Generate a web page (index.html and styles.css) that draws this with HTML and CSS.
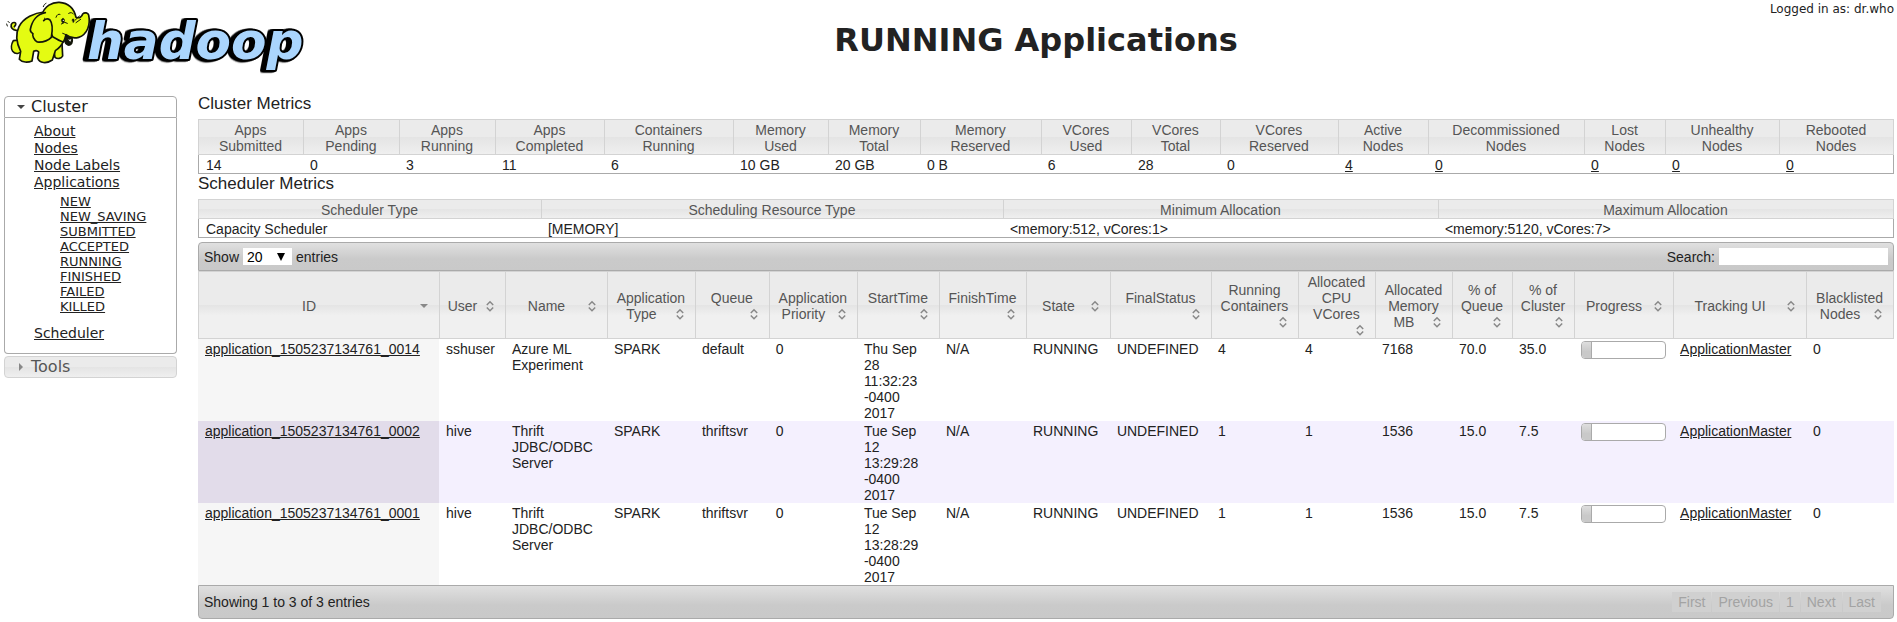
FILE: index.html
```html
<!DOCTYPE html>
<html lang="en">
<head>
<meta charset="utf-8">
<title>RUNNING Applications</title>
<link rel="stylesheet" href="styles.css">
</head>
<body>
<svg class="defs" width="0" height="0" aria-hidden="true">
  <symbol id="sort" viewBox="0 0 16 16"><path d="M4.800 7 8 3.800 11.200 7M4.800 9.500 8 12.700 11.200 9.500" fill="none" stroke="#888" stroke-width="1.500"/></symbol>
  <symbol id="sort-down" viewBox="0 0 16 16"><path d="M4 6h8l-4 4z" fill="#888"/></symbol>
</svg>

<header class="top">
  <a class="logo" href="#" aria-label="Hadoop">
    <svg width="310" height="76" viewBox="0 0 930 228">
      <g stroke="#14170a" stroke-width="5" stroke-linejoin="round" stroke-linecap="round" fill="#e4fb12">
        <path d="M50 91C38 92 31 82 34 73 38 65 49 66 47 74L43 80"/>
        <path d="M40 122C34 132 32 146 38 154 46 164 60 162 66 152L60 120Z"/>
        <path d="M160 140 165 172C172 178 184 176 188 168L186 130 170 118Z"/>
        <path d="M132 36C104 38 70 54 57 80 46 102 50 130 62 154L58 178C66 188 84 188 96 183L101 154C107 151 113 152 116 156L113 174C118 190 140 192 157 180L166 152C178 144 186 134 190 124L196 70Z"/>
        <path d="M196 104C192 118 194 132 204 135 214 137 219 128 216 113Z" fill="#14170a"/>
        <path d="M126 44C134 18 156 6 178 7 206 9 222 24 228 52 238 56 246 50 248 42 254 36 264 38 266 45 272 74 262 104 236 112 222 116 208 112 198 104 196 112 194 120 190 126 178 122 168 116 158 110Z"/>
        <path d="M136 38C112 42 96 62 91 88 90 98 99 100 99 101 96 106 101 120 112 126 128 127 144 122 154 112 158 90 158 70 150 60 143 55 136 57 131 62"/>
        <path d="M168 52C170 44 176 41 180 43M206 40C212 36 218 38 220 42M226 60 238 48M228 68 242 58M184 72 194 67 202 70M188 100 198 104M130 20C132 14 134 12 138 10M22 78 20 72M28 68 24 64" fill="none" stroke-width="3"/>
        <path d="M184 60C186 53 192 53 194 60L192 68C188 70 184 67 184 60ZM216 60C218 53 224 56 223 64L220 68Z" fill="#14170a" stroke-width="1"/>
        <circle cx="190" cy="61" r="2" fill="#fff" stroke="none"/>
        <path d="M204 118C207 120 211 120 214 117L211 125Z" fill="#fff" stroke="none"/>
      </g>
      <text class="wordmark" x="261" y="176">hadoop</text>
    </svg>
  </a>
  <h1>RUNNING Applications</h1>
  <div class="user">Logged in as: dr.who</div>
</header>

<div class="layout">
  <nav class="side">
    <h3 class="side-head open"><svg width="16" height="16" viewBox="0 0 16 16"><path d="M4 6h8l-4 4z" fill="#454545"/></svg>Cluster</h3>
    <div class="side-body">
      <ul class="menu">
        <li><a href="#">About</a></li>
        <li><a href="#">Nodes</a></li>
        <li><a href="#">Node Labels</a></li>
        <li><a href="#">Applications</a>
          <ul class="submenu">
            <li><a href="#">NEW</a></li>
            <li><a href="#">NEW_SAVING</a></li>
            <li><a href="#">SUBMITTED</a></li>
            <li><a href="#">ACCEPTED</a></li>
            <li><a href="#">RUNNING</a></li>
            <li><a href="#">FINISHED</a></li>
            <li><a href="#">FAILED</a></li>
            <li><a href="#">KILLED</a></li>
          </ul>
        </li>
        <li><a href="#">Scheduler</a></li>
      </ul>
    </div>
    <h3 class="side-head closed"><svg width="16" height="16" viewBox="0 0 16 16"><path d="M6 4v8l4-4z" fill="#888"/></svg>Tools</h3>
  </nav>

  <main>
    <h3 class="section">Cluster Metrics</h3>
    <table class="grid metrics">
      <thead>
        <tr><th>Apps<br>Submitted</th><th>Apps<br>Pending</th><th>Apps<br>Running</th><th>Apps<br>Completed</th><th>Containers<br>Running</th><th>Memory<br>Used</th><th>Memory<br>Total</th><th>Memory<br>Reserved</th><th>VCores<br>Used</th><th>VCores<br>Total</th><th>VCores<br>Reserved</th><th>Active<br>Nodes</th><th>Decommissioned<br>Nodes</th><th>Lost<br>Nodes</th><th>Unhealthy<br>Nodes</th><th>Rebooted<br>Nodes</th></tr>
      </thead>
      <tbody>
        <tr><td>14</td><td>0</td><td>3</td><td>11</td><td>6</td><td>10 GB</td><td>20 GB</td><td>0 B</td><td>6</td><td>28</td><td>0</td><td><a href="#">4</a></td><td><a href="#">0</a></td><td><a href="#">0</a></td><td><a href="#">0</a></td><td><a href="#">0</a></td></tr>
      </tbody>
    </table>

    <h3 class="section">Scheduler Metrics</h3>
    <table class="grid scheduler">
      <thead>
        <tr><th>Scheduler Type</th><th>Scheduling Resource Type</th><th>Minimum Allocation</th><th>Maximum Allocation</th></tr>
      </thead>
      <tbody>
        <tr><td>Capacity Scheduler</td><td>[MEMORY]</td><td>&lt;memory:512, vCores:1&gt;</td><td>&lt;memory:5120, vCores:7&gt;</td></tr>
      </tbody>
    </table>

    <div class="bar bar-top">
      <label class="length">Show
        <span class="select"><select><option>20</option><option>40</option><option>60</option></select><svg width="8" height="8" viewBox="0 0 8 8"><path d="M0 0h8L4 8z"/></svg></span>
        entries</label>
      <label class="search">Search: <input type="text"></label>
    </div>
    <table class="grid apps">
      <thead>
        <tr>
          <th><div>ID<svg><use href="#sort-down"/></svg></div></th>
          <th><div>User<svg><use href="#sort"/></svg></div></th>
          <th><div>Name<svg><use href="#sort"/></svg></div></th>
          <th><div>Application Type<svg><use href="#sort"/></svg></div></th>
          <th><div>Queue<svg><use href="#sort"/></svg></div></th>
          <th><div>Application Priority<svg><use href="#sort"/></svg></div></th>
          <th><div>StartTime<svg><use href="#sort"/></svg></div></th>
          <th><div>FinishTime<svg><use href="#sort"/></svg></div></th>
          <th><div>State<svg><use href="#sort"/></svg></div></th>
          <th><div>FinalStatus<svg><use href="#sort"/></svg></div></th>
          <th><div>Running Containers<svg><use href="#sort"/></svg></div></th>
          <th><div>Allocated CPU VCores<svg><use href="#sort"/></svg></div></th>
          <th><div>Allocated Memory MB<svg><use href="#sort"/></svg></div></th>
          <th><div>% of Queue<svg><use href="#sort"/></svg></div></th>
          <th><div>% of Cluster<svg><use href="#sort"/></svg></div></th>
          <th><div>Progress<svg><use href="#sort"/></svg></div></th>
          <th><div>Tracking UI<svg><use href="#sort"/></svg></div></th>
          <th><div>Blacklisted Nodes<svg><use href="#sort"/></svg></div></th>
        </tr>
      </thead>
      <tbody>
        <tr><td><a href="#">application_1505237134761_0014</a></td><td>sshuser</td><td>Azure ML Experiment</td><td>SPARK</td><td>default</td><td>0</td><td>Thu Sep<br>28<br>11:32:23<br>-0400<br>2017</td><td>N/A</td><td>RUNNING</td><td>UNDEFINED</td><td>4</td><td>4</td><td>7168</td><td>70.0</td><td>35.0</td><td><div class="progress"><div class="progress-value" style="width:10%"></div></div></td><td><a href="#">ApplicationMaster</a></td><td>0</td></tr>
        <tr><td><a href="#">application_1505237134761_0002</a></td><td>hive</td><td>Thrift JDBC/ODBC Server</td><td>SPARK</td><td>thriftsvr</td><td>0</td><td>Tue Sep<br>12<br>13:29:28<br>-0400<br>2017</td><td>N/A</td><td>RUNNING</td><td>UNDEFINED</td><td>1</td><td>1</td><td>1536</td><td>15.0</td><td>7.5</td><td><div class="progress"><div class="progress-value" style="width:10%"></div></div></td><td><a href="#">ApplicationMaster</a></td><td>0</td></tr>
        <tr><td><a href="#">application_1505237134761_0001</a></td><td>hive</td><td>Thrift JDBC/ODBC Server</td><td>SPARK</td><td>thriftsvr</td><td>0</td><td>Tue Sep<br>12<br>13:28:29<br>-0400<br>2017</td><td>N/A</td><td>RUNNING</td><td>UNDEFINED</td><td>1</td><td>1</td><td>1536</td><td>15.0</td><td>7.5</td><td><div class="progress"><div class="progress-value" style="width:10%"></div></div></td><td><a href="#">ApplicationMaster</a></td><td>0</td></tr>
      </tbody>
    </table>
    <div class="bar bar-bottom">
      <div>Showing 1 to 3 of 3 entries</div>
      <div class="pager"><button disabled>First</button><button disabled>Previous</button><button disabled>1</button><button disabled>Next</button><button disabled>Last</button></div>
    </div>
  </main>
</div>
</body>
</html>
```
FILE: styles.css
```css
* { box-sizing: border-box; }
body {
  margin: 0;
  background: #fff;
  color: #222;
  font: 14px/16px Arial, "Liberation Sans", sans-serif;
}
a { color: #222; text-decoration: underline; }
h1, h3, ul { margin: 0; padding: 0; font-weight: normal; list-style: none; }
.defs { position: absolute; }

/* page header: logo, title and user share one row */
.top {
  display: grid;
  grid-template-columns: 175px 1fr;
  height: 95px;
  font-family: "DejaVu Sans", Verdana, sans-serif;
}
.top > * { grid-row: 1; }
.logo { grid-column: 1 / 3; justify-self: start; align-self: start; }
.logo svg { display: block; }
.wordmark {
  font-family: "DejaVu Sans", Verdana, sans-serif;
  font-size: 155px;
  font-weight: 700;
  font-style: italic;
  fill: #aad5fd;
  stroke: #000;
  stroke-width: 12px;
  stroke-linejoin: round;
  paint-order: stroke;
  filter: drop-shadow(-6px 1px 0 #000) drop-shadow(-6px 1px 0 #000);
}
h1 {
  grid-column: 2;
  padding-top: 20px;
  text-align: center;
  font-size: 32px;
  line-height: 40px;
  font-weight: bold;
}
.user { grid-column: 2; justify-self: end; align-self: start; padding: 1px 3px; font-size: 12px; }

.layout {
  display: grid;
  grid-template-columns: 173px minmax(0, 1fr);
  gap: 21px;
  align-items: start;
  padding: 0 3px 0 4px;
}

/* sidebar accordion */
.side { padding-top: 1px; font-family: "DejaVu Sans", Verdana, sans-serif; }
.side-head {
  display: flex;
  align-items: center;
  gap: 2px;
  padding-left: 8px;
  border: 1px solid #aaa;
  font-size: 16px;
  line-height: 20px;
}
.open { border-radius: 4px 4px 0 0; }
.closed {
  margin-top: 2px;
  border-color: #d3d3d3;
  border-radius: 4px;
  background: linear-gradient(#ebebeb 50%, #e4e4e4 50%, #efefef);
  color: #555;
}
.side-body {
  padding: 5px 0 11px 29px;
  border: 1px solid #aaa;
  border-top: 0;
  border-radius: 0 0 4px 4px;
}
.menu { font-size: 14px; line-height: 17px; }
.submenu { padding: 3px 0 11px 26px; font-size: 13px; line-height: 15px; }

/* tables */
.section { padding: 1px 0 7px; font-size: 17px; line-height: 16px; }
.grid { width: 100%; table-layout: fixed; border-collapse: separate; border-spacing: 0; }
.grid th {
  padding: 2px 7px 0 6px;
  border: solid #d3d3d3;
  border-width: 1px 0 1px 1px;
  background: linear-gradient(#ebebeb 50%, #e4e4e4 50%, #efefef);
  color: #555;
  font-weight: normal;
  vertical-align: middle;
}
.grid th:last-child { border-right-width: 1px; }
.grid td { padding: 2px 0 0 7px; vertical-align: top; }
.metrics td, .scheduler td { border-bottom: 1px solid #aaa; }
.metrics td:first-child, .scheduler td:first-child { border-left: 1px solid #aaa; }
.metrics td:last-child, .scheduler td:last-child { border-right: 1px solid #aaa; }
.metrics { margin-bottom: 1px; }
.scheduler { margin-bottom: 4px; }

.metrics th:nth-child(1) { width: 6.19%; }
.metrics th:nth-child(2) { width: 5.66%; }
.metrics th:nth-child(3) { width: 5.66%; }
.metrics th:nth-child(4) { width: 6.43%; }
.metrics th:nth-child(5) { width: 7.61%; }
.metrics th:nth-child(6) { width: 5.6%; }
.metrics th:nth-child(7) { width: 5.42%; }
.metrics th:nth-child(8) { width: 7.13%; }
.metrics th:nth-child(9) { width: 5.31%; }
.metrics th:nth-child(10) { width: 5.25%; }
.metrics th:nth-child(11) { width: 6.96%; }
.metrics th:nth-child(12) { width: 5.31%; }
.metrics th:nth-child(13) { width: 9.2%; }
.metrics th:nth-child(14) { width: 4.78%; }
.metrics th:nth-child(15) { width: 6.72%; }
.metrics th:nth-child(16) { width: 6.77%; }

.scheduler th:nth-child(1) { width: 20.22%; }
.scheduler th:nth-child(2) { width: 27.24%; }
.scheduler th:nth-child(3) { width: 25.65%; }
.scheduler th:nth-child(4) { width: 26.89%; }

.apps th:nth-child(1) { width: 14.21%; }
.apps th:nth-child(2) { width: 3.89%; }
.apps th:nth-child(3) { width: 6.01%; }
.apps th:nth-child(4) { width: 5.19%; }
.apps th:nth-child(5) { width: 4.36%; }
.apps th:nth-child(6) { width: 5.19%; }
.apps th:nth-child(7) { width: 4.84%; }
.apps th:nth-child(8) { width: 5.13%; }
.apps th:nth-child(9) { width: 4.95%; }
.apps th:nth-child(10) { width: 5.96%; }
.apps th:nth-child(11) { width: 5.13%; }
.apps th:nth-child(12) { width: 4.54%; }
.apps th:nth-child(13) { width: 4.54%; }
.apps th:nth-child(14) { width: 3.54%; }
.apps th:nth-child(15) { width: 3.66%; }
.apps th:nth-child(16) { width: 5.84%; }
.apps th:nth-child(17) { width: 7.84%; }
.apps th:nth-child(18) { width: 5.18%; }

.apps th { background: linear-gradient(#ebebeb 50%, #e4e4e4 50%, #f0f0f0 66%); }
.apps th div { display: flow-root; }
.apps th svg { float: right; width: 16px; height: 16px; margin-left: 3px; }
.apps td:first-child { background: #f6f6f6; }
.apps tr:nth-child(even) td { background: #f4f0fe; }
.apps tr:nth-child(even) td:first-child { background: #e2dcea; }

.progress { width: 85px; height: 18px; border: 1px solid #aaa; border-radius: 4px; background: #fff; overflow: hidden; }
.progress-value { min-width: 10px; height: 100%; border-right: 1px solid #aaa; background: linear-gradient(#dedede, #c9c9c9 60%); }

/* toolbars above and below the applications table */
.bar {
  display: flex;
  justify-content: space-between;
  align-items: center;
  padding: 5px;
  border: 1px solid #aaa;
  background: linear-gradient(#e0e0e0, #cacaca 60%, #c9c9c9);
}
.bar-top { border-radius: 4px 4px 0 0; }
.bar-bottom { padding: 6px 12px 6px 5px; border-radius: 0 0 4px 4px; }
.length { display: flex; align-items: center; gap: 4px; }
.select { display: grid; align-items: center; }
.select > * { grid-area: 1 / 1; }
.select svg { justify-self: end; margin-right: 7px; pointer-events: none; }
select {
  appearance: none;
  width: 49px;
  height: 17px;
  padding: 0 4px;
  border: 0;
  border-radius: 0;
  background: #fff;
  color: #000;
  font: inherit;
}
.search { display: flex; align-items: center; gap: 4px; }
.search input { width: 169px; height: 17px; padding: 0; border: 0; background: #fff; font: inherit; }
.pager { display: flex; gap: 1px; }
.pager button {
  height: 20px;
  padding: 0 5px;
  border: 1px solid #d0d0d0;
  background: #d0d0d0;
  color: #a3a3a3;
  font: inherit;
}
```
